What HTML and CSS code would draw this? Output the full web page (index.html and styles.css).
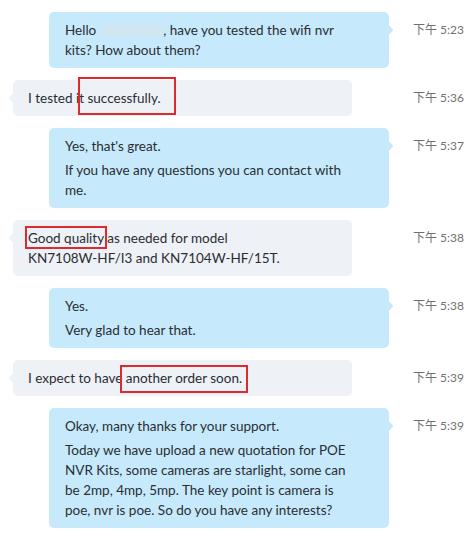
FILE: index.html
```html
<!DOCTYPE html>
<html lang="en">
<head>
  <meta charset="UTF-8" />
  <meta name="viewport" content="width=device-width, initial-scale=1.0"/>
  <title>Chat</title>
  <link rel="stylesheet" href="styles.css">
</head>
<body>
  <div class="chat">
    <div class="row">
      <div class="bubble mine">
        <p>Hello<span class="blurred"></span>, have you tested the wifi nvr kits? How about them?</p>
      </div>
      <div class="time">下午 5:23</div>
    </div>

    <div class="row">
      <div class="bubble theirs">
        <p>I tested it successfully.</p>
        <div class="mark mark-1"></div>
      </div>
      <div class="time">下午 5:36</div>
    </div>

    <div class="row">
      <div class="bubble mine">
        <p>Yes, that's great.</p>
        <p>If you have any questions you can contact with me.</p>
      </div>
      <div class="time">下午 5:37</div>
    </div>

    <div class="row">
      <div class="bubble theirs">
        <p>Good quality as needed for model <span class="nowrap">KN7108W-HF/I3</span> and <span class="nowrap">KN7104W-HF/15T.</span></p>
        <div class="mark mark-2"></div>
      </div>
      <div class="time">下午 5:38</div>
    </div>

    <div class="row">
      <div class="bubble mine">
        <p>Yes.</p>
        <p>Very glad to hear that.</p>
      </div>
      <div class="time">下午 5:38</div>
    </div>

    <div class="row">
      <div class="bubble theirs">
        <p>I expect to have another order soon.</p>
        <div class="mark mark-3"></div>
      </div>
      <div class="time">下午 5:39</div>
    </div>

    <div class="row">
      <div class="bubble mine">
        <p>Okay, many thanks for your support.</p>
        <p>Today we have upload a new quotation for POE NVR Kits, some cameras are starlight, some can be 2mp, 4mp, 5mp. The key point is camera is poe, nvr is poe. So do you have any interests?</p>
      </div>
      <div class="time">下午 5:39</div>
    </div>
  </div>
</body>
</html>
```

FILE: styles.css
```css
body {
  margin: 0;
  background: #ffffff;
  font-family: "Lato", "Noto Sans CJK SC", sans-serif;
  color: #2a2e33;
}

.chat {
  display: flex;
  flex-direction: column;
  gap: 12px;
  padding-top: 12px;
}

.row {
  display: grid;
  grid-template-columns: 400px 1fr;
  column-gap: 13px;
  align-items: start;
}

.bubble {
  position: relative;
  border-radius: 5px;
  padding: 8px 40px 8px 16px;
  font-size: 13.5px;
  line-height: 20px;
}

.bubble p {
  margin: 0;
}

.bubble p + p {
  margin-top: 4px;
}

.nowrap {
  white-space: nowrap;
}

.bubble::before {
  content: "";
  position: absolute;
  top: 14px;
  width: 8px;
  height: 8px;
  border-radius: 2px;
  transform: rotate(45deg);
}

.mine {
  background: #c6e9fb;
  margin-left: 49px;
  margin-right: 11px;
}

.mine::before {
  right: -3px;
  background: #c6e9fb;
}

.theirs {
  background: #eef1f6;
  margin-left: 13px;
  margin-right: 48px;
  padding-left: 15px;
}

.theirs::before {
  left: -3px;
  background: #eef1f6;
}

.blurred {
  display: inline-block;
  width: 62px;
  height: 12px;
  margin-left: 5px;
  vertical-align: -1px;
  background: #d0e7f1;
  border-radius: 3px;
}

.time {
  padding-top: 8px;
  font-size: 12px;
  line-height: 20px;
  color: #707070;
}

.mark {
  position: absolute;
  border: 2px solid #dd2a2f;
  box-sizing: border-box;
}

.mark-1 { left: 65px; top: -3px; width: 98px; height: 38px; }
.mark-2 { left: 12px; top: 6px; width: 82px; height: 23px; }
.mark-3 { left: 107px; top: 5px; width: 128px; height: 28px; }
```
